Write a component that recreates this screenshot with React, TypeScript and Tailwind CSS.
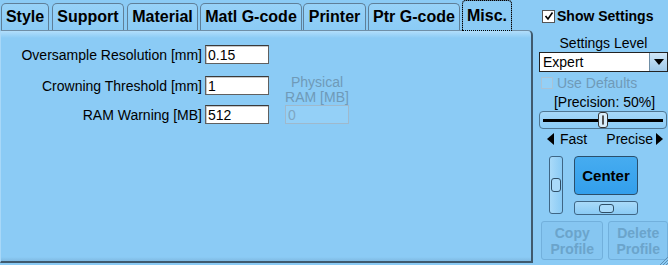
import React from "react";

const tabs: { label: string; cls: string }[] = [
  { label: "Style", cls: "w-[48px] ml-[1px]" },
  { label: "Support", cls: "w-[72px] ml-[3px]" },
  { label: "Material", cls: "w-[71px] ml-[3px]" },
  { label: "Matl G-code", cls: "w-[102px] ml-[2px]" },
  { label: "Printer", cls: "w-[63px] ml-[1px]" },
  { label: "Ptr G-code", cls: "w-[92px] ml-[2px]" },
];

function Field({ label, value }: { label: string; value: string }) {
  return (
    <div className="flex items-center h-[19px]">
      <div className="w-[204px] pr-[3px] text-right text-[14px] leading-none text-black whitespace-nowrap">{label}</div>
      <div className="w-[64px] h-[19px] bg-white border border-[#606060] border-t-[#3a3a3a] shadow-[inset_1px_1px_0_#c8c8c8] pl-[2px] flex items-center text-[14px] leading-none text-black">
        {value}
      </div>
    </div>
  );
}

function Tri({ dir }: { dir: "l" | "r" }) {
  return (
    <svg width="7" height="12" viewBox="0 0 7 12">
      {dir === "l" ? <polygon points="7,0 7,12 0,6" fill="#000" /> : <polygon points="0,0 0,12 7,6" fill="#000" />}
    </svg>
  );
}

export default function App() {
  return (
    <div className="w-[668px] h-[265px] bg-[#8bcbf5] flex overflow-hidden relative" style={{ fontFamily: '"Liberation Sans", Arial, sans-serif' }}>
      {/* Left column */}
      <div className="w-[533px] flex flex-col">
        <div className="h-[30px] flex items-end">
          {tabs.map((t) => (
            <div
              key={t.label}
              className={`${t.cls} h-[27px] border border-b-0 border-[#5f7f98] rounded-t-[5px] bg-[linear-gradient(to_bottom,#97d2f8,#8bcbf5)] flex items-center justify-center text-[16px] font-bold text-black leading-none whitespace-nowrap`}
            >
              {t.label}
            </div>
          ))}
          <div className="w-[50px] ml-[2px] h-[31px] mb-[-1px] border border-b-0 border-[#5f7f98] rounded-t-[4px] bg-[#8bcbf5] flex items-center justify-center text-[16px] font-bold text-black leading-none outline-1 outline-dotted outline-black outline-offset-[-1px] relative z-10">
            Misc.
          </div>
        </div>
        <div className="flex-1 mb-[2px] border-t border-[#6f8ea6] border-l border-l-[#a8d8f8] border-r-2 border-r-[#3f5a6e] border-b-2 border-b-[#3f5a6e] rounded-tr-[5px] bg-[linear-gradient(to_bottom,#b2defb,#8bcbf5_7px,#8bcbf5_calc(100%-4px),#7fb9e2)] pt-[14px]">
          <Field label="Oversample Resolution [mm]" value="0.15" />
          <div className="flex items-end mt-[11px]">
            <div className="flex flex-col gap-[10px]">
              <Field label="Crowning Threshold [mm]" value="1" />
              <Field label="RAM Warning [MB]" value="512" />
            </div>
            <div className="ml-[16px] w-[64px] flex flex-col items-center">
              <div className="text-[14px] leading-[15px] text-[#6f9ab8] text-center">
                Physical
                <br />
                RAM [MB]
              </div>
              <div className="w-[64px] h-[19px] bg-[#94d0f7] border border-[#9fb9cc] pl-[2px] flex items-center text-[14px] leading-none text-[#7ea6c2]">
                0
              </div>
            </div>
          </div>
        </div>
      </div>

      {/* Right column */}
      <div className="ml-[6px] w-[129px] flex flex-col">
        <div className="mt-[7px] h-[18px] flex items-center pl-[3px]">
          <div className="w-[13px] h-[13px] bg-white border border-[#555] flex items-center justify-center">
            <svg width="10" height="10" viewBox="0 0 10 10">
              <path d="M1.5 5 L4 8 L8.5 1.5" stroke="#000" strokeWidth="1.6" fill="none" />
            </svg>
          </div>
          <span className="ml-[2px] text-[14px] font-bold leading-none text-black">Show Settings</span>
        </div>
        <div className="mt-[9px] h-[17px] flex items-center justify-center text-[14px] leading-none text-black">Settings Level</div>
        <div className="mt-[1px] h-[20px] w-[129px] bg-white border border-[#222] flex items-stretch">
          <div className="flex-1 pl-[3px] flex items-center text-[14px] leading-none text-black">Expert</div>
          <div className="w-[18px] bg-[linear-gradient(to_bottom,#cfe6f7,#9ec9ea)] border-l border-[#6f8ea6] flex items-center justify-center">
            <svg width="10" height="6" viewBox="0 0 10 6">
              <polygon points="0,0 10,0 5,6" fill="#000" />
            </svg>
          </div>
        </div>
        <div className="mt-[3px] h-[16px] flex items-center pl-[2px]">
          <div className="w-[12px] h-[12px] bg-[#94d0f7] border border-[#a9c3d6]" />
          <span className="ml-[4px] text-[14px] leading-none text-[#6f9ab8]">Use Defaults</span>
        </div>
        <div className="mt-[3px] h-[16px] flex items-center justify-center text-[14px] leading-none text-black pl-[2px]">[Precision: 50%]</div>
        <div className="mt-[1px] h-[18px] w-[128px] rounded-[4px] border border-[#4f7794] bg-[linear-gradient(to_bottom,#a6d8f9,#8bcbf5)] flex items-center px-[3px]">
          <div className="flex-1 h-[3px] bg-black" />
          <div className="w-[10px] h-[16px] rounded-[3px] border border-[#333] bg-[#d8eefc] flex items-center justify-center">
            <div className="w-[2px] h-[10px] border border-[#555] rounded-[1px]" />
          </div>
          <div className="flex-1 h-[3px] bg-black" />
        </div>
        <div className="mt-[2px] h-[16px] flex items-center justify-between pl-[8px] pr-[5px] text-[14px] leading-none text-black">
          <div className="flex items-center gap-[6px]">
            <Tri dir="l" />
            <span>Fast</span>
          </div>
          <div className="flex items-center gap-[3px]">
            <span>Precise</span>
            <Tri dir="r" />
          </div>
        </div>
        <div className="mt-[9px] flex gap-[11px] pl-[10px]">
          <div className="w-[14px] h-[58px] rounded-[3px] border border-[#3f6685] bg-[linear-gradient(to_right,#a9daf9,#8bcbf5)] flex items-center justify-center">
            <div className="w-[10px] h-[14px] rounded-[3px] border border-[#2f4e66] bg-[#a9dafa]" />
          </div>
          <div className="flex flex-col gap-[6px]">
            <div className="w-[64px] h-[39px] rounded-[4px] border border-[#2a4f6c] bg-[linear-gradient(to_bottom,#46acf0,#339fec)] flex items-center justify-center text-[15px] font-bold leading-none text-black">
              Center
            </div>
            <div className="w-[64px] h-[14px] rounded-[3px] border border-[#3f6685] bg-[linear-gradient(to_bottom,#a9daf9,#8bcbf5)] flex items-center justify-center">
              <div className="w-[15px] h-[9px] rounded-[3px] border border-[#2f4e66] bg-[#a9dafa]" />
            </div>
          </div>
        </div>
        <div className="mt-[6px] flex gap-[5px] pl-[2px]">
          <div className="w-[63px] h-[39px] rounded-[3px] border border-[#72b0dc] bg-[#86c6f1] flex flex-col items-center justify-center text-[14px] font-bold leading-[16px] text-[#6ba4cb]">
            <span>Copy</span>
            <span>Profile</span>
          </div>
          <div className="w-[60px] h-[39px] rounded-[3px] border border-[#72b0dc] bg-[#86c6f1] flex flex-col items-center justify-center text-[14px] font-bold leading-[16px] text-[#6ba4cb]">
            <span>Delete</span>
            <span>Profile</span>
          </div>
        </div>
      </div>
      <svg className="absolute right-0 bottom-0" width="10" height="10" viewBox="0 0 10 10">
        <path d="M10 2 L2 10 M10 5 L5 10 M10 8 L8 10" stroke="#5f8fb3" strokeWidth="1" />
      </svg>
    </div>
  );
}
